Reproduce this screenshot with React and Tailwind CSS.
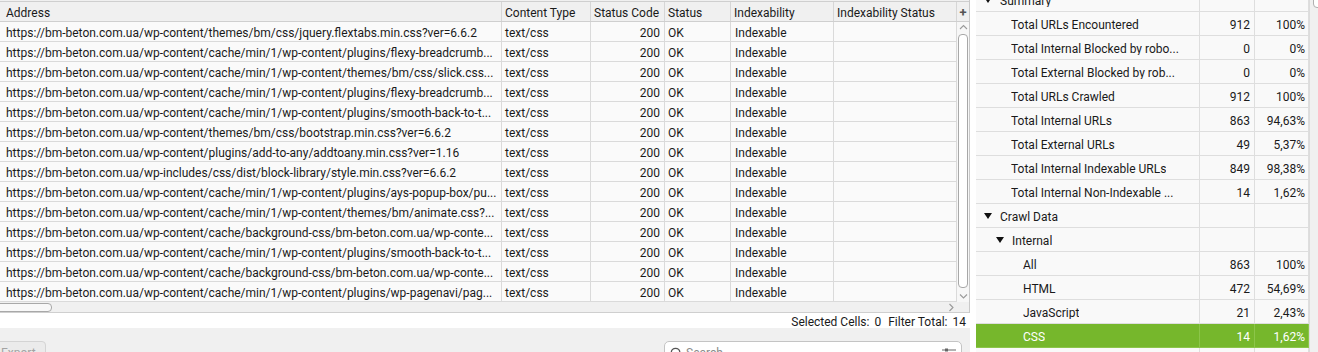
import React from "react";

const font = { fontFamily: "Roboto, 'Liberation Sans', sans-serif" };

const urls = [
  "https://bm-beton.com.ua/wp-content/themes/bm/css/jquery.flextabs.min.css?ver=6.6.2",
  "https://bm-beton.com.ua/wp-content/cache/min/1/wp-content/plugins/flexy-breadcrumb...",
  "https://bm-beton.com.ua/wp-content/cache/min/1/wp-content/themes/bm/css/slick.css...",
  "https://bm-beton.com.ua/wp-content/cache/min/1/wp-content/plugins/flexy-breadcrumb...",
  "https://bm-beton.com.ua/wp-content/cache/min/1/wp-content/plugins/smooth-back-to-t...",
  "https://bm-beton.com.ua/wp-content/themes/bm/css/bootstrap.min.css?ver=6.6.2",
  "https://bm-beton.com.ua/wp-content/plugins/add-to-any/addtoany.min.css?ver=1.16",
  "https://bm-beton.com.ua/wp-includes/css/dist/block-library/style.min.css?ver=6.6.2",
  "https://bm-beton.com.ua/wp-content/cache/min/1/wp-content/plugins/ays-popup-box/pu...",
  "https://bm-beton.com.ua/wp-content/cache/min/1/wp-content/themes/bm/animate.css?...",
  "https://bm-beton.com.ua/wp-content/cache/background-css/bm-beton.com.ua/wp-conte...",
  "https://bm-beton.com.ua/wp-content/cache/min/1/wp-content/plugins/smooth-back-to-t...",
  "https://bm-beton.com.ua/wp-content/cache/background-css/bm-beton.com.ua/wp-conte...",
  "https://bm-beton.com.ua/wp-content/cache/min/1/wp-content/plugins/wp-pagenavi/pag...",
];

const overview = [
  { label: "Summary", level: 0, toggle: true },
  { label: "Total URLs Encountered", level: 2, n: "912", p: "100%" },
  { label: "Total Internal Blocked by robo...", level: 2, n: "0", p: "0%" },
  { label: "Total External Blocked by rob...", level: 2, n: "0", p: "0%" },
  { label: "Total URLs Crawled", level: 2, n: "912", p: "100%" },
  { label: "Total Internal URLs", level: 2, n: "863", p: "94,63%" },
  { label: "Total External URLs", level: 2, n: "49", p: "5,37%" },
  { label: "Total Internal Indexable URLs", level: 2, n: "849", p: "98,38%" },
  { label: "Total Internal Non-Indexable ...", level: 2, n: "14", p: "1,62%" },
  { label: "Crawl Data", level: 0, toggle: true },
  { label: "Internal", level: 1, toggle: true },
  { label: "All", level: 3, n: "863", p: "100%" },
  { label: "HTML", level: 3, n: "472", p: "54,69%" },
  { label: "JavaScript", level: 3, n: "21", p: "2,43%" },
  { label: "CSS", level: 3, n: "14", p: "1,62%", active: true },
  { label: "", level: 3 },
];

const Chevron = ({ dir }) => {
  const d = {
    up: "M1 5 L4.5 1.5 L8 5",
    down: "M1 1.5 L4.5 5 L8 1.5",
    right: "M1.5 1 L5 4.5 L1.5 8",
  }[dir];
  const size = dir === "right" ? "w-[7px] h-[9px]" : "w-[9px] h-[7px]";
  return (
    <svg viewBox={dir === "right" ? "0 0 7 9" : "0 0 9 7"} className={size}>
      <path d={d} fill="none" stroke="#9a9a9a" strokeWidth="1.1" />
    </svg>
  );
};

const Triangle = () => (
  <svg viewBox="0 0 8 6" className="-mt-[2px] w-[8px] h-[6px] shrink-0">
    <path d="M0 0 L8 0 L4 6 Z" fill="#111" />
  </svg>
);

const headers = [
  { t: "Address", w: "w-[502px]", pl: "pl-[6px]" },
  { t: "Content Type", w: "w-[89px]", pl: "pl-[3px]" },
  { t: "Status Code", w: "w-[74px]", pl: "pl-[3px]" },
  { t: "Status", w: "w-[66px]", pl: "pl-[3px]" },
  { t: "Indexability", w: "w-[103px]", pl: "pl-[3px]" },
  { t: "Indexability Status", w: "w-[123px]", pl: "pl-[3px]" },
];

const App = () => {
  return (
    <div
      className="flex h-[352px] w-[1318px] overflow-hidden bg-white text-[12px] text-[#1a1a1a]"
      style={font}
    >
      {/* left: results table */}
      <div className="flex w-[970px] shrink-0 flex-col bg-[#f0f0f0]">
        <div className="flex flex-col border-r border-[#c9c9c9] bg-[#f0f0f0] pt-px">
          {/* header */}
          <div className="flex h-[21px] border-y border-[#cfcfcf] bg-[#f0f0f0]">
            {headers.map((h) => (
              <div
                key={h.t}
                className={`${h.w} ${h.pl} shrink-0 border-r border-[#d6d6d6] leading-[22px]`}
              >
                {h.t}
              </div>
            ))}
            <div className="flex w-[12px] items-center justify-center pt-px text-[13px] font-bold leading-none text-[#555]">
              +
            </div>
          </div>

          {/* body + vertical scrollbar */}
          <div className="flex">
            <div className="flex w-[957px] flex-col">
              {urls.map((u, i) => (
                <div
                  key={i}
                  className="flex h-[20px] border-b border-[#dadada] bg-[#fafafa] leading-[22px]"
                >
                  <div className="w-[502px] shrink-0 truncate border-r border-[#dadada] pl-[6px]">
                    {u}
                  </div>
                  <div className="w-[89px] shrink-0 border-r border-[#dadada] pl-[3px]">
                    text/css
                  </div>
                  <div className="w-[74px] shrink-0 border-r border-[#dadada] pr-[4px] text-right">
                    200
                  </div>
                  <div className="w-[66px] shrink-0 border-r border-[#dadada] pl-[3px]">OK</div>
                  <div className="w-[103px] shrink-0 border-r border-[#dadada] pl-[4px]">
                    Indexable
                  </div>
                  <div className="w-[123px] shrink-0 border-r border-[#dadada]"></div>
                </div>
              ))}
            </div>
            <div className="flex w-[12px] flex-col items-center bg-[#f7f7f7] pt-[2px]">
              <Chevron dir="up" />
              <div className="mt-[3px] h-[254px] w-[10px] rounded-[4px] border border-[#a8a8a8] bg-white"></div>
              <div className="mt-[5px]">
                <Chevron dir="down" />
              </div>
            </div>
          </div>

          {/* horizontal scrollbar */}
          <div className="flex h-[11px] items-center justify-between border-b border-[#cfcfcf] bg-[#f0f0f0] pr-[14px]">
            <div className="-ml-[6px] h-[9px] w-[58px] rounded-[4px] border border-[#a8a8a8] bg-[#f8f8f8]"></div>
            <Chevron dir="right" />
          </div>
        </div>

        {/* status line */}
        <div className="flex h-[15px] items-center justify-end gap-[5px] bg-white pt-[3px] pr-[4px] leading-none">
          <span>Selected Cells:</span>
          <span>0</span>
          <span className="ml-[2px]">Filter Total:</span>
          <span>14</span>
        </div>

        {/* bottom bar */}
        <div className="flex flex-1 items-start justify-between pt-[13px] pr-[8px]">
          <button className="-ml-[9px] h-[24px] rounded-[4px] border border-[#d4d4d4] bg-[#ebebeb] px-[9px] text-left leading-[22px] text-[#a3a3a3]">
            Export
          </button>
          <div className="flex h-[24px] w-[298px] items-center rounded-[5px] border border-[#c4c4c4] bg-white px-[5px]">
            <svg viewBox="0 0 14 14" className="h-[13px] w-[13px] shrink-0">
              <circle cx="6" cy="6" r="4.6" fill="none" stroke="#555" strokeWidth="1.4" />
              <path d="M9.4 9.4 L13 13" stroke="#555" strokeWidth="1.6" />
            </svg>
            <span className="ml-[3px] flex-1 text-[#8a8a8a]">Search</span>
            <svg viewBox="0 0 14 10" className="h-[10px] w-[14px] shrink-0">
              <path d="M0 2 H14 M0 7 H14" stroke="#666" strokeWidth="1" />
              <rect x="3" y="0.5" width="3" height="3" fill="#666" />
              <rect x="8" y="5.5" width="3" height="3" fill="#666" />
            </svg>
          </div>
        </div>
      </div>

      {/* splitter */}
      <div className="w-[6px] shrink-0 bg-white"></div>

      {/* right: overview tree */}
      <div className="flex flex-1 overflow-hidden">
        <div className="-mt-[12px] flex w-[333px] shrink-0 flex-col">
          {overview.map((r, i) => {
            const indent = ["pl-[8px]", "pl-[20px]", "pl-[35px]", "pl-[47px]"][r.level];
            const bg = r.active ? "bg-[#76b72c] text-white" : "bg-[#f9f9f9]";
            const line = r.active ? "border-[#8cc54a]" : "border-[#dedede]";
            return (
              <div
                key={i}
                className={`flex h-[24px] shrink-0 border-b ${line} ${bg} leading-none`}
              >
                <div
                  className={`flex w-[224px] shrink-0 items-center gap-[8px] border-r ${line} ${indent} pt-[3px]`}
                >
                  {r.toggle && <Triangle />}
                  <span className="truncate">{r.label}</span>
                </div>
                <div
                  className={`flex w-[55px] shrink-0 items-center justify-end border-r ${line} pt-[3px] pr-[4px]`}
                >
                  {r.n}
                </div>
                <div
                  className={`flex w-[54px] shrink-0 items-center justify-end border-r ${line} pt-[3px] pr-[3px]`}
                >
                  {r.p}
                </div>
              </div>
            );
          })}
        </div>
        <div className="flex-1 border-l border-[#dcdcdc] bg-[#f0f0f0] pl-[3px]">
          <div className="-mt-[10px] h-[18px] w-[12px] rounded-[4px] border border-[#b0b0b0] bg-white"></div>
        </div>
      </div>
    </div>
  );
};

export default App;
